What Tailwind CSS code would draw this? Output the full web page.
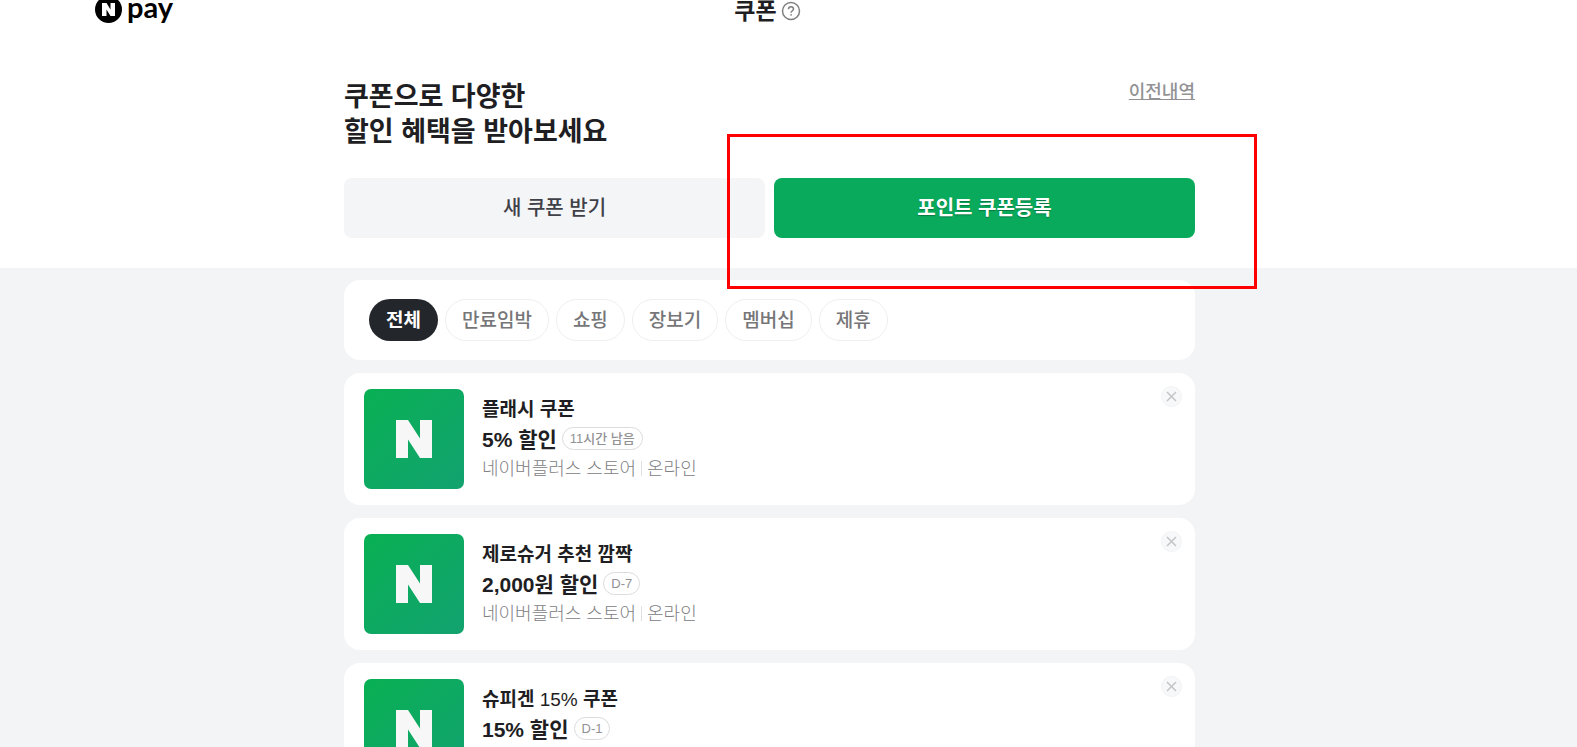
<!DOCTYPE html>
<html lang="ko">
<head>
  <meta charset="UTF-8" />
  <meta name="viewport" content="width=device-width, initial-scale=1.0" />
  <title>쿠폰 - N pay</title>
  <script src="https://cdn.jsdelivr.net/npm/@tailwindcss/browser@4"></script>
</head>
<body class="bg-[#f3f4f6] h-screen overflow-hidden font-['Liberation_Sans','Noto_Sans_CJK_KR',sans-serif] text-[#1e1e23]">
  <!-- 상단 -->
  <div class="bg-white pb-[30px]">
    <header class="-mt-4 h-[50px] grid grid-cols-[1fr_auto_1fr] items-center pl-[95px] pr-[137px]">
      <a href="#" aria-label="N pay" class="flex items-center gap-[5px]">
        <svg class="size-[27px]" viewBox="0 0 27 27">
          <circle cx="13.5" cy="13.5" r="13.5" fill="#000" />
          <path d="M7 7h4.500l4 6.500V7H20v13h-4.500l-4-6.500V20H7z" fill="#fff" />
        </svg>
        <span class="font-['Lato',sans-serif] font-bold text-[29px] leading-[27px] text-black pb-[6px]">pay</span>
      </a>
      <div class="flex items-center gap-1 pt-1">
        <h1 class="text-[23px] leading-[30px] font-bold">쿠폰</h1>
        <button type="button" aria-label="도움말">
          <svg class="size-5" viewBox="0 0 20 20" fill="none" stroke="#808080" stroke-width="1.5">
            <circle cx="10" cy="10" r="8.5" />
            <path d="M7.5 8.200c0-1.500 1.100-2.500 2.500-2.500s2.500 1 2.500 2.300c0 1.700-2.400 1.800-2.400 3.800" />
            <circle cx="10.1" cy="13.8" r="0.9" fill="#808080" stroke="none" />
          </svg>
        </button>
      </div>
    </header>

    <div class="pr-[38px]">
      <div class="max-w-[851px] mx-auto pt-[46px]">
        <div class="flex justify-between items-start">
          <h2 class="text-[27px] leading-[35px] font-bold">쿠폰으로 다양한<br />할인 혜택을 받아보세요</h2>
          <a href="#" class="text-[18px] leading-[24px] font-medium text-[#929294] underline underline-offset-1">이전내역</a>
        </div>
        <div class="grid grid-cols-2 gap-[9px] mt-7">
          <button type="button" class="h-[60px] rounded-lg bg-[#f3f5f7] text-[20px] font-medium text-[#404048]">새 쿠폰 받기</button>
          <div class="relative">
            <button type="button" class="w-full h-[60px] rounded-lg bg-[#09aa5c] text-[20px] font-bold text-white text-shadow-[0_1px_1px_rgb(0_0_0/0.3)]">포인트 쿠폰등록</button>
            <!-- 강조 표시 -->
            <div class="absolute -left-[47px] -right-[62px] -top-[44px] -bottom-[51px] border-3 border-[#ff0000] pointer-events-none"></div>
          </div>
        </div>
      </div>
    </div>
  </div>

  <main class="pr-[38px]">
    <div class="max-w-[851px] mx-auto pt-3 flex flex-col gap-[13px]">
      <!-- 분류 -->
      <nav class="bg-white rounded-2xl h-20 px-[25px] flex items-center gap-[7px] text-[19px] font-medium text-[#767678]">
        <button type="button" class="h-[42px] pt-0.5 px-[17px] rounded-full bg-[#23272c] text-white font-bold">전체</button>
        <button type="button" class="h-[42px] pt-0.5 px-4 rounded-full border border-[#eeeff1]">만료임박</button>
        <button type="button" class="h-[42px] pt-0.5 px-4 rounded-full border border-[#eeeff1]">쇼핑</button>
        <button type="button" class="h-[42px] pt-0.5 px-4 rounded-full border border-[#eeeff1]">장보기</button>
        <button type="button" class="h-[42px] pt-0.5 px-4 rounded-full border border-[#eeeff1]">멤버십</button>
        <button type="button" class="h-[42px] pt-0.5 px-4 rounded-full border border-[#eeeff1]">제휴</button>
      </nav>

      <!-- 쿠폰 목록 -->
      <article class="relative bg-white rounded-2xl h-[132px] px-5 flex items-center gap-[18px]">
        <div class="size-[100px] rounded-[7px] bg-linear-to-br from-[#09b052] to-[#12a26f] flex items-center justify-center">
          <svg class="w-9 h-[38px]" viewBox="0 0 36 38"><path d="M0 0h12l12 18.500V0h12v38H24L12 19.500V38H0z" fill="#f7f7f7" /></svg>
        </div>
        <div>
          <h3 class="text-[19px] leading-[30px] font-bold">플래시 쿠폰</h3>
          <div class="flex items-start gap-[5px]">
            <strong class="text-[21px] leading-[29px] font-bold">5% 할인</strong>
            <span class="mt-0.5 h-[23px] px-[7px] rounded-full border border-[#dcdcde] text-[13px] leading-[21px] font-medium text-[#929294]">11시간 남음</span>
          </div>
          <p class="flex items-center text-[18px] leading-[30px] font-light text-[#808083]">네이버플러스 스토어<span class="w-px h-[15px] bg-[#e0e0e2] mx-[5px]"></span>온라인</p>
        </div>
        <button type="button" aria-label="삭제" class="absolute top-[13px] right-[13px]">
          <svg class="size-[21px]" viewBox="0 0 21 21"><circle cx="10.5" cy="10.5" r="10" fill="#f7f8f9" stroke="#f1f2f4" /><path d="M6 6l9 9M15 6l-9 9" stroke="#c4c4c6" stroke-width="1.5" /></svg>
        </button>
      </article>

      <article class="relative bg-white rounded-2xl h-[132px] px-5 flex items-center gap-[18px]">
        <div class="size-[100px] rounded-[7px] bg-linear-to-br from-[#09b052] to-[#12a26f] flex items-center justify-center">
          <svg class="w-9 h-[38px]" viewBox="0 0 36 38"><path d="M0 0h12l12 18.500V0h12v38H24L12 19.500V38H0z" fill="#f7f7f7" /></svg>
        </div>
        <div>
          <h3 class="text-[19px] leading-[30px] font-bold">제로슈거 추천 깜짝</h3>
          <div class="flex items-start gap-[5px]">
            <strong class="text-[21px] leading-[29px] font-bold">2,000원 할인</strong>
            <span class="mt-0.5 h-[23px] px-[7px] rounded-full border border-[#dcdcde] text-[13px] leading-[21px] font-medium text-[#929294]">D-7</span>
          </div>
          <p class="flex items-center text-[18px] leading-[30px] font-light text-[#808083]">네이버플러스 스토어<span class="w-px h-[15px] bg-[#e0e0e2] mx-[5px]"></span>온라인</p>
        </div>
        <button type="button" aria-label="삭제" class="absolute top-[13px] right-[13px]">
          <svg class="size-[21px]" viewBox="0 0 21 21"><circle cx="10.5" cy="10.5" r="10" fill="#f7f8f9" stroke="#f1f2f4" /><path d="M6 6l9 9M15 6l-9 9" stroke="#c4c4c6" stroke-width="1.5" /></svg>
        </button>
      </article>

      <article class="relative bg-white rounded-2xl h-[132px] px-5 flex items-center gap-[18px]">
        <div class="size-[100px] rounded-[7px] bg-linear-to-br from-[#09b052] to-[#12a26f] flex items-center justify-center">
          <svg class="w-9 h-[38px]" viewBox="0 0 36 38"><path d="M0 0h12l12 18.500V0h12v38H24L12 19.500V38H0z" fill="#f7f7f7" /></svg>
        </div>
        <div>
          <h3 class="text-[19px] leading-[30px] font-bold">슈피겐 <span class="font-normal">15%</span> 쿠폰</h3>
          <div class="flex items-start gap-[5px]">
            <strong class="text-[21px] leading-[29px] font-bold">15% 할인</strong>
            <span class="mt-0.5 h-[23px] px-[7px] rounded-full border border-[#dcdcde] text-[13px] leading-[21px] font-medium text-[#929294]">D-1</span>
          </div>
          <p class="flex items-center text-[18px] leading-[30px] font-light text-[#808083]">네이버플러스 스토어<span class="w-px h-[15px] bg-[#e0e0e2] mx-[5px]"></span>온라인</p>
        </div>
        <button type="button" aria-label="삭제" class="absolute top-[13px] right-[13px]">
          <svg class="size-[21px]" viewBox="0 0 21 21"><circle cx="10.5" cy="10.5" r="10" fill="#f7f8f9" stroke="#f1f2f4" /><path d="M6 6l9 9M15 6l-9 9" stroke="#c4c4c6" stroke-width="1.5" /></svg>
        </button>
      </article>
    </div>
  </main>
</body>
</html>
